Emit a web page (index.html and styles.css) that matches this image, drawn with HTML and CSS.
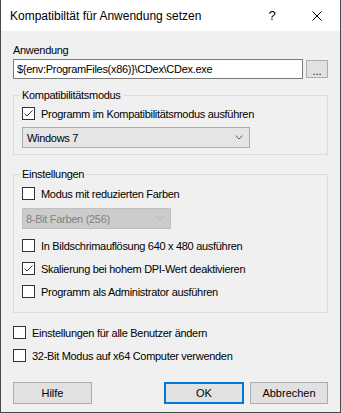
FILE: index.html
```html
<!DOCTYPE html>
<html lang="de">
<head>
    <meta charset="UTF-8">
    <meta name="viewport" content="width=device-width, initial-scale=1.0">
    <title>Kompatibiltät für Anwendung setzen</title>
    <link rel="stylesheet" href="styles.css">
</head>
<body>
    <div class="dialog">
        <div class="titlebar">
            <span class="title">Kompatibiltät für Anwendung setzen</span>
            <span class="cap-btn help">?</span>
            <span class="cap-btn">
                <svg width="10" height="10" viewBox="0 0 10 10">
                    <path d="M0.5 0.5 L9.5 9.5 M9.5 0.5 L0.5 9.5" stroke="#000" stroke-width="1" fill="none"/>
                </svg>
            </span>
        </div>
        <div class="content">
            <div class="field-label">Anwendung</div>
            <div class="path-row">
                <div class="edit">${env:ProgramFiles(x86)}\CDex\CDex.exe</div>
                <button class="browse">...</button>
            </div>

            <fieldset class="group group-compat">
                <legend>Kompatibilitätsmodus</legend>
                <label class="check first">
                    <span class="box">
                        <svg width="11" height="11" viewBox="0 0 11 11">
                            <polyline points="1.5,5.5 4,8 9.5,2.5" stroke="#333" stroke-width="1" fill="none"/>
                        </svg>
                    </span>
                    Programm im Kompatibilitätsmodus ausführen
                </label>
                <div class="combo">
                    <span>Windows 7</span>
                    <svg width="8" height="5" viewBox="0 0 8 5">
                        <polyline points="0.5,0.5 4,4 7.5,0.5" stroke="#606060" stroke-width="1" fill="none"/>
                    </svg>
                </div>
            </fieldset>

            <fieldset class="group group-settings">
                <legend>Einstellungen</legend>
                <label class="check first"><span class="box"></span>Modus mit reduzierten Farben</label>
                <div class="combo combo-small disabled">
                    <span>8-Bit Farben (256)</span>
                    <svg width="8" height="5" viewBox="0 0 8 5">
                        <polyline points="0.5,0.5 4,4 7.5,0.5" stroke="#b4b4b4" stroke-width="1" fill="none"/>
                    </svg>
                </div>
                <label class="check after-combo"><span class="box"></span>In Bildschrimauflösung 640 x 480 ausführen</label>
                <label class="check next">
                    <span class="box">
                        <svg width="11" height="11" viewBox="0 0 11 11">
                            <polyline points="1.5,5.5 4,8 9.5,2.5" stroke="#333" stroke-width="1" fill="none"/>
                        </svg>
                    </span>
                    Skalierung bei hohem DPI-Wert deaktivieren
                </label>
                <label class="check next"><span class="box"></span>Programm als Administrator ausführen</label>
            </fieldset>

            <label class="check outer"><span class="box"></span>Einstellungen für alle Benutzer ändern</label>
            <label class="check next"><span class="box"></span>32-Bit Modus auf x64 Computer verwenden</label>

            <div class="buttons">
                <button class="btn btn-help">Hilfe</button>
                <button class="btn btn-ok">OK</button>
                <button class="btn">Abbrechen</button>
            </div>
        </div>
    </div>
</body>
</html>
```

FILE: styles.css
```css
body {
    margin: 0;
    background-color: #f0f0f0;
    font-family: "Liberation Sans", Arial, sans-serif;
    font-size: 11px;
    letter-spacing: -0.3px;
    color: #000;
}
.dialog {
    width: 341px;
    height: 413px;
    box-sizing: border-box;
    border: 1px solid #4a4a4a;
    border-top: none;
    background-color: #f0f0f0;
    display: flex;
    flex-direction: column;
}
.titlebar {
    height: 31px;
    flex-shrink: 0;
    background-color: #fff;
    display: flex;
    align-items: center;
}
.title {
    flex: 1;
    padding-left: 9px;
    font-size: 12px;
    letter-spacing: 0;
}
.cap-btn {
    width: 46px;
    height: 31px;
    display: flex;
    align-items: center;
    justify-content: center;
}
.help {
    font-size: 13px;
    letter-spacing: 0;
    padding-left: 2px;
    box-sizing: border-box;
}
.content {
    padding: 0 12px;
    display: flex;
    flex-direction: column;
}
.field-label {
    margin-top: 12px;
    line-height: 15px;
}
.path-row {
    margin-top: 1px;
    display: flex;
    align-items: center;
    gap: 3px;
}
.edit {
    flex: 1;
    height: 20px;
    box-sizing: border-box;
    border: 1px solid #7a7a7a;
    background-color: #fff;
    padding-left: 3px;
    line-height: 18px;
    white-space: nowrap;
}
.browse {
    width: 22px;
    height: 18px;
    box-sizing: border-box;
    border: 1px solid #adadad;
    background-color: #e1e1e1;
    padding: 4px 0 0;
    font: inherit;
    line-height: 12px;
    color: #000;
}

/* group boxes */
.group {
    margin: 10px 0 0;
    padding: 0 8px 6px;
    border: 1px solid #dcdcdc;
    min-width: 0;
}
.group legend {
    padding: 0 2px;
    margin-left: -2px;
    line-height: 13px;
}
.group-settings {
    margin-top: 13px;
    padding-bottom: 13px;
}
.check {
    display: flex;
    align-items: center;
    gap: 6px;
    height: 15px;
    white-space: nowrap;
}
.check.first {
    margin-top: 4px;
}
.check.next {
    margin-top: 8px;
}
.check.after-combo {
    margin-top: 9px;
}
.check.outer {
    margin-top: 12px;
}
.group-settings .check.first {
    margin-top: 5px;
}
.box {
    width: 13px;
    height: 13px;
    flex-shrink: 0;
    box-sizing: border-box;
    border: 1px solid #333;
    background-color: #fff;
    display: flex;
}
.combo {
    margin-top: 6px;
    width: 228px;
    height: 21px;
    box-sizing: border-box;
    border: 1px solid #acacac;
    background-color: #e5e5e5;
    display: flex;
    align-items: center;
    justify-content: space-between;
    padding: 0 6px 0 4px;
}
.combo-small {
    margin-top: 7px;
    width: 149px;
    padding-left: 3px;
}
.combo.disabled {
    background-color: #cccccc;
    border-color: #bfbfbf;
    color: #838383;
}

/* bottom buttons */
.buttons {
    display: flex;
    margin-top: 19px;
}
.btn {
    width: 78px;
    height: 22px;
    box-sizing: border-box;
    border: 1px solid #adadad;
    background-color: #e1e1e1;
    font: inherit;
    color: #000;
    padding: 0;
}
.btn-help {
    width: 79px;
    margin-right: auto;
}
.btn-ok {
    width: 80px;
    margin-right: 6px;
    border: 2px solid #0078d7;
}
```
